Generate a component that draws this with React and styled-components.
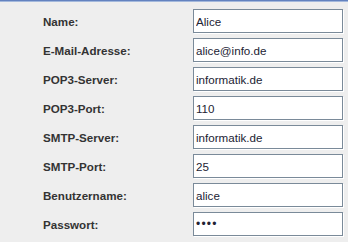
import { Fragment } from "react";
import styled, { createGlobalStyle } from "styled-components";

const GlobalStyle = createGlobalStyle`
  html, body {
    margin: 0;
    padding: 0;
    background: #eeeeee;
  }
`;

const Panel = styled.div`
  width: 348px;
  height: 242px;
  box-sizing: border-box;
  background: #eeeeee;
  border-top: 1px solid #6382bf;
  box-shadow: inset 0 1px 0 #a3b8dc;
  padding: 8px 0 0 43px;
  font-family: "Liberation Sans", Arial, sans-serif;
`;

const Form = styled.div`
  display: grid;
  grid-template-columns: 150px 150px;
  row-gap: 5px;
  align-items: center;
`;

const Label = styled.label`
  font-size: 11.6px;
  font-weight: bold;
  color: #333333;
`;

const Field = styled.input`
  box-sizing: border-box;
  height: 24px;
  width: 150px;
  margin: 0;
  padding: 0 2px;
  border: 1px solid #7a8a99;
  box-shadow: 1px 1px 0 #ffffff;
  background: #ffffff;
  font-family: "Liberation Sans", Arial, sans-serif;
  font-size: ${(p) => (p.type === "password" ? "12px" : "11.6px")};
  letter-spacing: ${(p) => (p.type === "password" ? "1.2px" : "0")};
  color: #222233;
  outline: none;
`;

const fields = [
  ["Name:", "Alice"],
  ["E-Mail-Adresse:", "alice@info.de"],
  ["POP3-Server:", "informatik.de"],
  ["POP3-Port:", "110"],
  ["SMTP-Server:", "informatik.de"],
  ["SMTP-Port:", "25"],
  ["Benutzername:", "alice"],
  ["Passwort:", "1234", "password"],
];

export default function App() {
  return (
    <>
      <GlobalStyle />
      <Panel>
        <Form>
          {fields.map(([label, value, type]) => (
            <Fragment key={label}>
              <Label>{label}</Label>
              <Field type={type || "text"} defaultValue={value} />
            </Fragment>
          ))}
        </Form>
      </Panel>
    </>
  );
}
